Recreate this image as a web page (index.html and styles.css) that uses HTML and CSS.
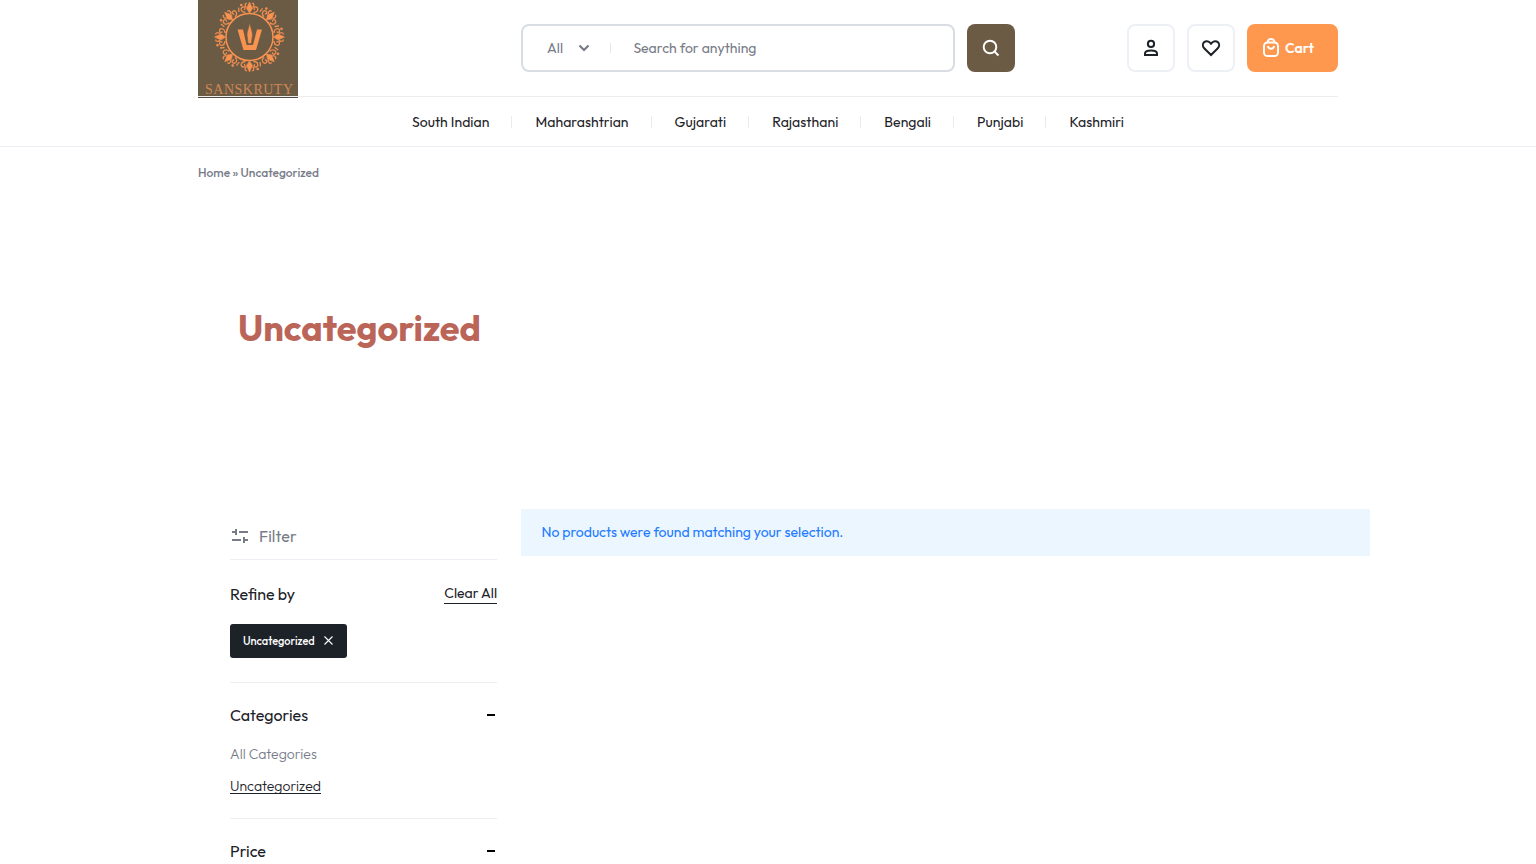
FILE: index.html
```html
<!DOCTYPE html>
<html lang="en">
<head>
<meta charset="utf-8">
<title>Uncategorized</title>
<link rel="stylesheet" href="styles.css">
</head>
<body>
<header class="header">
  <div class="container topbar">
    <a class="logo" href="#" aria-label="Sanskruty">
      <svg width="100" height="98" viewBox="0 0 100 98">
        <defs>
          <g id="petal" fill="none" stroke="#ee8d50" stroke-width="1.300">
            <path d="M51.500 13l-3-4.500 3-6.500 3 6.500z" fill="#fb9350" stroke-width=".6"/>
            <path d="M47.500 12.500c-5 0-5.500-5-2.500-5.500 2-.3 2.500 2 1 2.800M55.500 12.500c5 0 5.500-5 2.500-5.500-2-.3-2.500 2-1 2.800M48.500 7.500c-2.500-2-1-5 .5-4M54.500 7.500c2.500-2 1-5-.5-4"/>
            <path d="M41 12l-.5-4.500"/>
            <circle cx="43.300" cy="5" r=".7" fill="#fb9350"/>
          </g>
        </defs>
        <path d="M0 0h100v96H0z" fill="#6b5b45"/>
        <path d="M0 97h100v1H0z" fill="#51493f"/>
        <circle cx="51.500" cy="37" r="23.500" fill="none" stroke="#fb9350" stroke-width="1.500"/>
        <use href="#petal"/><use href="#petal" transform="rotate(45 51.500 37)"/><use href="#petal" transform="rotate(90 51.500 37)"/><use href="#petal" transform="rotate(135 51.500 37)"/><use href="#petal" transform="rotate(180 51.500 37)"/><use href="#petal" transform="rotate(225 51.500 37)"/><use href="#petal" transform="rotate(270 51.500 37)"/><use href="#petal" transform="rotate(315 51.500 37)"/>
        <path d="M39.500 29.500H45l3.500 15.500h6.500l4-15.500h5L58 50H45.500z" fill="#fb9350"/>
        <path d="M51.700 22.500c1 6 2.800 8.500 2.800 12.500l-1.200 8.500h-3.200L49 35c0-4 1.700-6.500 2.700-12.500z" fill="#fb9350" stroke="#6b5b45" stroke-width=".6"/>
        <text class="logo-text" x="7" y="93.500" textLength="88">SANSKRUTY</text>
      </svg>
    </a>
    <form class="search">
      <div class="search-box">
        <span class="category">All</span>
        <svg class="chevron" width="12" height="8" viewBox="0 0 12 8"><path d="M1.500 1.500L6 6l4.500-4.500" fill="none" stroke="#787c88" stroke-width="2.200"/></svg>
        <i class="divider"></i>
        <span>Search for anything</span>
      </div>
      <button class="search-btn" type="button" aria-label="Search">
        <svg width="18" height="18" viewBox="0 0 18 18" fill="none" stroke="#fff" stroke-width="1.900"><circle cx="8" cy="8" r="6.300"/><path d="M12.500 12.500l4 4"/></svg>
      </button>
    </form>
    <div class="actions">
      <a class="icon-btn" href="#" aria-label="Account"><svg width="16" height="18" viewBox="0 0 16 18" fill="none" stroke="#1d2228" stroke-width="2"><circle cx="8" cy="4.900" r="3.100"/><path d="M2 16v-1.500C2 12 4.500 11.500 8 11.500s6 .5 6 3V16z"/></svg></a>
      <a class="icon-btn" href="#" aria-label="Wishlist"><svg width="20" height="18" viewBox="0 0 20 18" fill="none" stroke="#1d2228" stroke-width="2"><path d="M10 16L3.200 9.200C1.500 7.500 1.400 5 3 3.300c1.700-1.600 4.200-1.500 5.700.1L10 4.800l1.300-1.400c1.500-1.600 4-1.700 5.700-.1 1.600 1.700 1.500 4.200-.2 5.900z"/></svg></a>
      <a class="cart" href="#"><svg width="18" height="20" viewBox="0 0 18 20" fill="none" stroke="#fff" stroke-width="1.900"><rect x="2" y="4.500" width="14" height="13.500" rx="3.500"/><path d="M5.500 4.300C5.500 2.200 7 1 9 1s3.500 1.200 3.500 3.300M5.700 8c.5 1.800 1.600 2.700 3.300 2.700s2.800-.9 3.300-2.700"/></svg><span>Cart</span></a>
    </div>
  </div>
  <nav class="nav">
    <a href="#">South Indian</a>
    <a href="#">Maharashtrian</a>
    <a href="#">Gujarati</a>
    <a href="#">Rajasthani</a>
    <a href="#">Bengali</a>
    <a href="#">Punjabi</a>
    <a href="#">Kashmiri</a>
  </nav>
</header>
<main>
  <div class="container crumbs">Home » Uncategorized</div>
  <section class="container hero"><h1>Uncategorized</h1></section>
  <div class="shop">
    <aside class="sidebar">
      <div class="filter"><svg width="20" height="18" viewBox="0 0 20 18" fill="none" stroke="#787c88" stroke-width="2"><path d="M2 5h5M6 2v6M9 5h9M2 13h9M14 10v6M14 13h4"/></svg><span>Filter</span></div>
      <div class="refine">
        <div class="row"><h2>Refine by</h2><a class="clear" href="#">Clear All</a></div>
        <a class="chip" href="#"><span>Uncategorized</span><svg width="9" height="9" viewBox="0 0 9 9" stroke="#fff" stroke-width="1.100"><path d="M.5.5l8 8M8.500.5l-8 8"/></svg></a>
      </div>
      <div class="group">
        <div class="row"><h2>Categories</h2><i class="minus"></i></div>
        <ul><li>All Categories</li><li><a class="current" href="#">Uncategorized</a></li></ul>
      </div>
      <div class="group last"><div class="row"><h2>Price</h2><i class="minus"></i></div></div>
    </aside>
    <p class="notice">No products were found matching your selection.</p>
  </div>
</main>
</body>
</html>
```
FILE: styles.css
```css
* { box-sizing: border-box; }
body { margin: 0; background: #fff; color: #1d2228; font-family: Outfit, Lato, sans-serif; font-size: 14px; line-height: 20px; font-weight: 400; }
a { color: inherit; text-decoration: none; }
h1, h2, p, ul { margin: 0; padding: 0; list-style: none; font-weight: 400; }
svg { display: block; flex: none; }
.container { width: 1140px; margin: 0 auto; }
.header { height: 147px; border-bottom: 1px solid #ebeef3; }
.topbar { display: flex; height: 97px; border-bottom: 1px solid #ededf0; }
.logo { width: 100px; height: 98px; }
.logo-text { font: 14px "Liberation Serif", serif; fill: #cf8855; }
.search { display: flex; gap: 12px; margin: 24px 0 0 223px; }
.search-box { display: flex; align-items: center; width: 434px; height: 48px; padding-left: 24px; border: 2px solid #d8dde3; border-radius: 8px; color: #787c88; font-weight: 450; letter-spacing: 0.02px; }
.category { width: 16.5px; }
.chevron { margin-left: 14.5px; }
.divider { width: 1px; height: 10px; margin: 0 22.4px 0 20px; background: #e6e8ec; }
.search-btn { display: flex; align-items: center; justify-content: center; width: 48px; height: 48px; padding: 0; border: 0; border-radius: 8px; background: #6b5b45; }
.actions { display: flex; gap: 12px; margin: 24px 0 0 auto; }
.icon-btn { display: flex; align-items: center; justify-content: center; width: 48px; height: 48px; border: 2px solid #edf0f4; border-radius: 8px; }
.cart { display: flex; align-items: center; gap: 5px; width: 91px; height: 48px; padding-left: 15px; border-radius: 8px; background: #ff984f; color: #fff; font-weight: 600; }
.nav { display: flex; justify-content: center; align-items: center; height: 49px; letter-spacing: 0.045px; }
.nav a { display: flex; align-items: center; height: 12px; padding: 0 22px 0 23px; border-right: 1px solid #e9ebf0; }
.nav a:first-child { padding-left: 0; }
.nav a:last-child { padding-right: 0; border: 0; }
.crumbs { padding-top: 16px; color: #787c88; font-size: 12px; font-weight: 500; }
.hero { height: 326px; padding: 121px 40px 0; }
h1 { color: #bb6559; font-size: 36px; line-height: 47px; font-weight: 700; }
.shop { display: flex; gap: 24px; width: 1140px; margin: 0 0 0 230px; }
.sidebar { width: 267px; font-size: 16px; }
.filter { display: flex; align-items: center; gap: 9px; height: 51px; padding-top: 4px; border-bottom: 1px solid #ebeef3; color: #787c88; letter-spacing: 0.1px; }
.row { display: flex; align-items: center; justify-content: space-between; height: 24px; }
h2 { font-size: 16px; }
.refine { height: 123px; padding-top: 22px; border-bottom: 1px solid #ebedef; }
.clear { height: 21px; margin-top: -1px; border-bottom: 1px solid #1d2228; font-size: 14px; line-height: 21px; }
.chip { display: flex; align-items: center; gap: 9px; width: 117px; height: 34px; margin-top: 18px; padding-left: 13px; border-radius: 3px; background: #1d2228; color: #fff; font-size: 11px; font-weight: 500; letter-spacing: -0.02px; }
.chip svg { margin-top: -1px; }
.group { height: 136px; padding-top: 20px; border-bottom: 1px solid #ebedef; font-size: 14px; }
.group.last { height: 45px; border: 0; }
.minus { width: 8px; height: 2px; margin-right: 2px; background: #000; }
ul { padding-top: 15px; color: #787c88; font-weight: 350; line-height: 24px; letter-spacing: 0.02px; }
li { height: 32px; }
.current { display: inline-block; height: 20px; border-bottom: 1px solid #1d2228; color: #1d2228; }
.notice { width: 849px; height: 47px; padding: 13px 20.5px; background: #ebf6ff; color: #1e7bff; font-weight: 450; letter-spacing: 0; }
```
